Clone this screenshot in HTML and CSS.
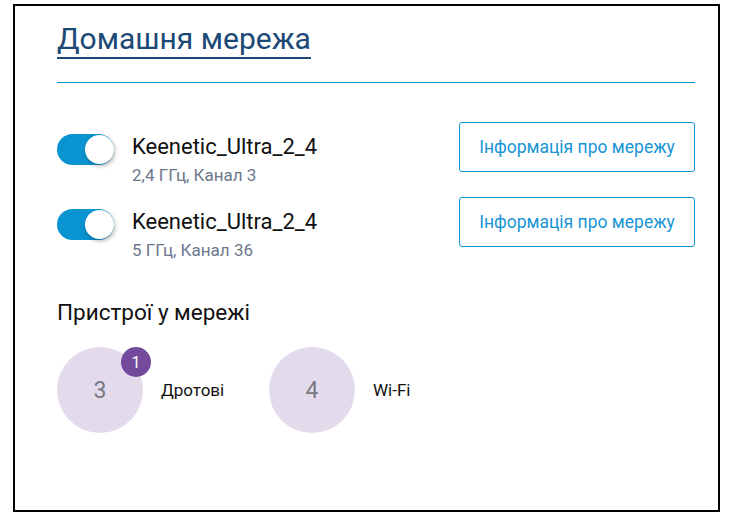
FILE: index.html
```html
<!DOCTYPE html>
<html>
<head>
    <title>Домашня мережа</title>
    <link rel="stylesheet" href="styles.css">
</head>
<body>
    <div class="frame">
        <h1 class="title"><span>Домашня мережа</span></h1>
        <div class="divider"></div>

        <div class="net-row">
            <div class="net-left">
                <div class="toggle"><div class="knob"></div></div>
                <div class="net-info">
                    <div class="net-name">Keenetic_Ultra_2_4</div>
                    <div class="net-sub">2,4 ГГц, Канал 3</div>
                </div>
            </div>
            <button class="info-btn">Інформація про мережу</button>
        </div>

        <div class="net-row">
            <div class="net-left">
                <div class="toggle"><div class="knob"></div></div>
                <div class="net-info">
                    <div class="net-name">Keenetic_Ultra_2_4</div>
                    <div class="net-sub">5 ГГц, Канал 36</div>
                </div>
            </div>
            <button class="info-btn">Інформація про мережу</button>
        </div>

        <h2 class="devices-title">Пристрої у мережі</h2>
        <div class="devices">
            <div class="device">
                <div class="circle">3<span class="badge">1</span></div>
                <span class="device-label">Дротові</span>
            </div>
            <div class="device">
                <div class="circle">4</div>
                <span class="device-label">Wi-Fi</span>
            </div>
        </div>
    </div>
</body>
</html>
```

FILE: styles.css
```css
body {
    margin: 0;
    background: #fff;
    font-family: Roboto, "Noto Sans", Arial, sans-serif;
}
.frame {
    box-sizing: border-box;
    width: 707px;
    height: 508px;
    margin: 4px 0 0 13px;
    border: 2px solid #000;
    padding: 15px 23px 0 42px;
}
.title {
    margin: 0;
    font-size: 30px;
    font-weight: 400;
    line-height: 36px;
    color: #1b4875;
}
.title span {
    display: inline-block;
    border-bottom: 2px solid #1b4875;
}
.divider {
    height: 1px;
    margin-top: 23px;
    background: #0a97d6;
}
.net-row {
    display: flex;
    justify-content: space-between;
    align-items: flex-start;
    margin-top: 39px;
}
.net-row + .net-row {
    margin-top: 12px;
}
.net-left {
    display: flex;
    align-items: flex-start;
    gap: 18px;
    padding-top: 12px;
}
.toggle {
    position: relative;
    width: 57px;
    height: 31px;
    border-radius: 16px;
    background: #0994d1;
}
.knob {
    position: absolute;
    top: 1px;
    right: 0;
    width: 29px;
    height: 29px;
    border-radius: 50%;
    background: #fff;
    box-shadow: 1px 2px 4px rgba(0, 0, 0, 0.3);
}
.net-name {
    font-size: 22px;
    line-height: 26px;
    color: #111;
}
.net-sub {
    margin-top: 5px;
    font-size: 17px;
    line-height: 20px;
    color: #6c778c;
}
.info-btn {
    width: 236px;
    height: 50px;
    border: 1px solid #0a97d6;
    border-radius: 3px;
    background: #fff;
    color: #1895d4;
    font-family: inherit;
    font-size: 17.5px;
    padding: 0;
}
.devices-title {
    margin: 39px 0 0;
    font-size: 22.5px;
    font-weight: 400;
    line-height: 26px;
    color: #111;
}
.devices {
    display: flex;
    margin-top: 22px;
}
.device {
    display: flex;
    align-items: center;
    gap: 18px;
    width: 212px;
}
.circle {
    position: relative;
    width: 86px;
    height: 86px;
    border-radius: 50%;
    background: #e3dbeb;
    display: flex;
    align-items: center;
    justify-content: center;
    font-size: 23px;
    color: #797983;
}
.badge {
    position: absolute;
    top: 0;
    right: -8px;
    width: 30px;
    height: 30px;
    border-radius: 50%;
    background: #744a9d;
    color: #fff;
    font-size: 16px;
    display: flex;
    align-items: center;
    justify-content: center;
}
.device-label {
    font-size: 17px;
    color: #111;
}
```
